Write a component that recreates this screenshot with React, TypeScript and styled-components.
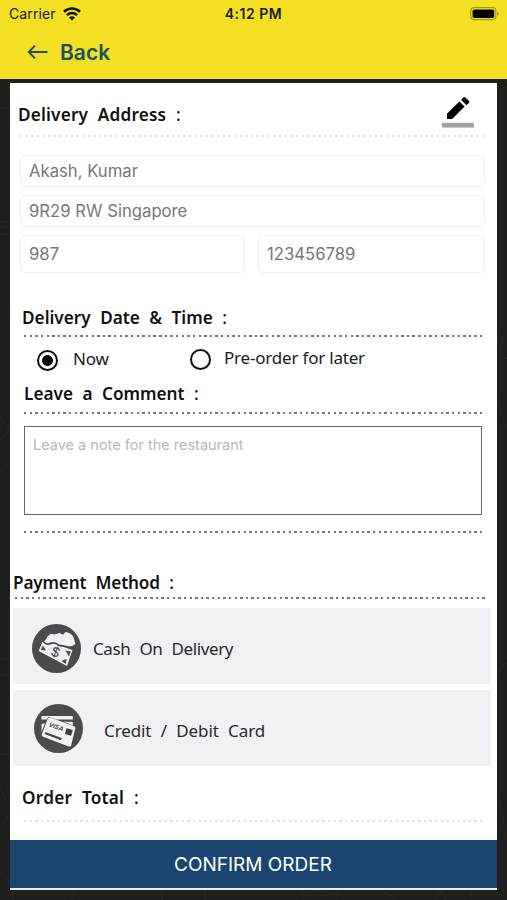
import { useState } from "react";
import styled, { createGlobalStyle, ThemeProvider } from "styled-components";

const theme = {
	colors: {
		yellow: "#f3e022",
		navy: "#1b456e",
		teal: "#1f5060",
		dark: "#1f1f1e",
		text: "#1a1a1a",
		input: "#777777",
		inputBorder: "#efefef",
		row: "#f0f0f5",
	},
	fonts: {
		system: '"Inter", sans-serif',
		body: '"Noto Sans", sans-serif',
	},
};

export default function App() {
	const [when, setWhen] = useState("now");

	return (
		<ThemeProvider theme={theme}>
			<GlobalStyle />
			<Screen>
				<Header>
					<StatusBar>
						<Carrier>
							Carrier
							<WifiIcon />
						</Carrier>
						<Clock>4:12 PM</Clock>
						<BatteryIcon />
					</StatusBar>
					<BackButton>
						<ArrowIcon />
						Back
					</BackButton>
				</Header>
				<Body>
					<Doodles />
					<Card>
						<AddressHead>
							<Heading $track={0.18}>
								Delivery Address <Colon>:</Colon>
							</Heading>
							<PencilIcon />
						</AddressHead>
						<Dots $light $left={10} $right={13} />
						<Fields>
							<Field $wide>Akash, Kumar</Field>
							<Field $wide>9R29 RW Singapore</Field>
							<Field $tall>987</Field>
							<Field $tall>123456789</Field>
						</Fields>
						<Section $top={33} $left={12}>
							<Heading>
								Delivery Date &amp; Time <Colon>:</Colon>
							</Heading>
						</Section>
						<Dots $top={5} $left={14} $right={15} />
						<Options>
							<Option onClick={() => setWhen("now")}>
								<Radio $checked={when === "now"} />
								<OptionText $gap={15}>Now</OptionText>
							</Option>
							<Option onClick={() => setWhen("later")} $raised>
								<Radio $checked={when === "later"} />
								<OptionText $gap={13}>Pre-order for later</OptionText>
							</Option>
						</Options>
						<Section $top={3} $left={14}>
							<Heading>
								Leave a Comment <Colon>:</Colon>
							</Heading>
						</Section>
						<Dots $top={6} $left={14} $right={15} />
						<Comment placeholder='Leave a note for the restaurant' />
						<Dots $top={16} $left={14} $right={15} />
						<Section $top={38} $left={3}>
							<Heading $track={-0.18}>
								Payment Method <Colon>:</Colon>
							</Heading>
						</Section>
						<Dots $top={2} $left={5} $right={11} />
						<Methods>
							<Method $top={4} $left={19} $gap={12}>
								<CashIcon />
								<MethodText $track={-0.38}>Cash On Delivery</MethodText>
							</Method>
							<Method $left={21} $gap={21}>
								<CardIcon />
								<MethodText $track={-0.1} $top={4}>
									Credit / Debit Card
								</MethodText>
							</Method>
						</Methods>
						<Section $top={20} $left={12}>
							<Heading $track={0.25}>
								Order Total <Colon>:</Colon>
							</Heading>
						</Section>
						<Dots $light $top={10} $left={14} $right={15} />
					</Card>
					<Confirm>CONFIRM ORDER</Confirm>
				</Body>
			</Screen>
		</ThemeProvider>
	);
}

const WifiIcon = () => (
	<svg width='18' height='14' viewBox='0 0 18 14' fill='none' stroke='#111' strokeWidth='2.6'>
		<path d='M1 4.8C5.6 .4 12.4 .4 17 4.8' />
		<path d='M4 8.1C6.9 5.4 11.1 5.4 14 8.1' />
		<path d='M9 13.4L6 10.4C7.7 8.9 10.3 8.9 12 10.4Z' fill='#111' stroke='none' />
	</svg>
);

const BatteryIcon = () => (
	<svg width='30' height='14' viewBox='0 0 30 14'>
		<rect x='.8' y='.6' width='25' height='12' rx='3.4' fill='none' stroke='#a3981e' strokeWidth='1.2' />
		<rect x='2.6' y='2.4' width='21.6' height='8.6' rx='1.8' fill='#000' />
		<path d='M27.3 4.4C29.2 5.2 29.2 8 27.3 8.8Z' fill='#8f851c' />
	</svg>
);

const ArrowIcon = () => (
	<svg width='21' height='16' viewBox='0 0 21 16' fill='none' stroke='#1f5060' strokeWidth='1.9'>
		<path d='M20.5 8H2M8 1.6L1.7 8L8 14.4' />
	</svg>
);

const PencilIcon = () => (
	<svg width='32' height='32' viewBox='0 0 32 32'>
		<path d='M5 17.8V23H10.2L22.6 10.6L17.4 5.4Z' fill='#000' />
		<path d='M19 3.8L21.4 1.4Q22.4.5 23.4 1.4L27 5Q27.8 6 27 7L24.4 9.2Z' fill='#000' />
		<rect y='26.8' width='32' height='4.8' fill='#a3a3a3' />
	</svg>
);

const CashIcon = () => (
	<svg width='49' height='49' viewBox='0 0 49 49'>
		<circle cx='24.5' cy='24.5' r='24.5' fill='#4b4b4b' />
		<path
			d='M12 17.5Q14.5 15.5 15.5 12.5Q18 9 22 10.5L27.5 9L31 10.8L33.5 8Q38 8.5 41 12L43.5 20Q40 23 35.5 22Q31 20.5 27 20.5Q22 16.5 17 19Q14 20 12 17.5Z'
			fill='#f0f0f5'
		/>
		<path d='M10.5 17.5Q13.5 22 18.5 20.5Q23 18.5 27 22.5Q32 22.5 36 24.5L40.5 26L35 42L6.7 27Z' fill='#f0f0f5' />
		<path d='M11 21.5L14 26.5L8.8 26Z M29.5 37L34.6 34.8L34 40Z M33.5 26.5L38.8 27.5L37 32.5Z' fill='#4b4b4b' />
		<text
			x='23.6'
			y='32.8'
			textAnchor='middle'
			fontFamily='Liberation Sans'
			fontSize='14'
			fill='#333'
			transform='rotate(22 23.6 28)'
		>
			$
		</text>
	</svg>
);

const CardIcon = () => (
	<svg width='49' height='49' viewBox='0 0 49 49'>
		<circle cx='24.5' cy='24.5' r='24.5' fill='#4b4b4b' />
		<path d='M7.5 12H38.8V15.6H22L14.5 12.8L12.6 15.6H7.5Z' fill='#f0f0f5' />
		<path d='M7.5 20L11 19.2L7.5 28Z M29.5 17.6L38.8 18V21.4Z' fill='#f0f0f5' />
		<path
			d='M16.2 13.4L39.8 22Q41.8 22.7 41.3 24.6L37.2 41.2Q36.6 43 34.8 42.4L9 32.8Q7.3 32 7.9 30.2L13.8 14.5Q14.6 12.8 16.2 13.4Z'
			fill='#f0f0f5'
		/>
		<rect x='31.6' y='25' width='6.4' height='6' fill='#3c3c3c' transform='rotate(16 35 28)' />
		<path d='M11 29L27.3 35.2' stroke='#4b4b4b' strokeWidth='2.4' />
		<text
			x='14.4'
			y='22.4'
			fontFamily='Liberation Sans'
			fontSize='6.4'
			fontWeight='700'
			fontStyle='italic'
			fill='#444'
			transform='rotate(19 14.4 22.4)'
		>
			VISA
		</text>
	</svg>
);

const Doodles = () => (
	<Backdrop viewBox='0 0 507 821' fill='none' stroke='#2b2824' strokeWidth='1'>
		<path d='M0 29H9M0 143H9M0 148H9M0 155H9M0 338L9 350M0 360Q7 360 9 345M0 393L9 382M0 580H9M0 596H9M0 675H9' />
		<path d='M0 708L9 730M0 750L9 735M0 795Q12 797 13 821M72 812V821M162 821V811M205 812V821M297 821Q297 812 317 812Q342 812 344 821M303 816H338' />
		<path d='M375 811Q394 815 396 821M435 821L441 812L446 821M471 812V821M498 250Q506 260 500 274L507 280M498 320Q503 343 507 350M498 14L507 8M498 595Q502 585 507 584M498 720Q503 730 505 760' />
	</Backdrop>
);

const GlobalStyle = createGlobalStyle`
	* {
		box-sizing: border-box;
	}

	body {
		margin: 0;
	}

	button {
		border: 0;
		padding: 0;
		background: none;
		font: inherit;
		color: inherit;
	}
`;

const Screen = styled.main`
	width: 507px;
	height: 900px;
	display: flex;
	flex-direction: column;
	overflow: hidden;
	background: ${({ theme }) => theme.colors.dark};
	color: ${({ theme }) => theme.colors.text};
	font-family: ${({ theme }) => theme.fonts.body};
`;

const Header = styled.header`
	height: 79px;
	background: ${({ theme }) => theme.colors.yellow};
	font-family: ${({ theme }) => theme.fonts.system};
`;

const StatusBar = styled.div`
	height: 27px;
	padding: 0 7px 0 9px;
	display: grid;
	grid-template-columns: 1fr auto 1fr;
	align-items: center;
	font-size: 14px;

	> svg {
		justify-self: end;
	}
`;

const Carrier = styled.div`
	display: flex;
	align-items: center;
	gap: 7px;
	letter-spacing: 0.1px;
`;

const Clock = styled.div`
	margin-right: 2px;
	font-weight: 600;
	letter-spacing: 0.5px;
`;

const BackButton = styled.button`
	height: 50px;
	margin-left: 27px;
	display: flex;
	align-items: center;
	gap: 12px;
	color: ${({ theme }) => theme.colors.teal};
	font-size: 21px;
	font-weight: 600;
`;

const Body = styled.div`
	position: relative;
	flex: 1;
	padding: 4px 10px 10px;
	display: flex;
	flex-direction: column;
`;

const Backdrop = styled.svg`
	position: absolute;
	inset: 0;
	width: 100%;
	height: 100%;
`;

const Card = styled.section`
	position: relative;
	height: 757px;
	background: #fff;
`;

const AddressHead = styled.div`
	height: 52px;
	padding: 13px 23px 0 8px;
	display: flex;
	justify-content: space-between;
	align-items: flex-start;

	h2 {
		margin-top: 7px;
	}
`;

const Heading = styled.h2<{ $track?: number }>`
	margin: 0;
	font-size: 17.2px;
	line-height: 24px;
	font-weight: 600;
	letter-spacing: ${({ $track = 0 }) => $track}px;
	word-spacing: 5px;
	color: #111;
	white-space: nowrap;
`;

const Colon = styled.span`
	font-weight: 500;
`;

const Section = styled.div<{ $top: number; $left: number }>`
	padding: ${({ $top }) => $top}px 0 0 ${({ $left }) => $left}px;
`;

const Dots = styled.div<{ $light?: boolean; $top?: number; $left: number; $right: number }>`
	height: 2px;
	margin: ${({ $top = 0 }) => $top}px ${({ $right }) => $right}px 0 ${({ $left }) => $left}px;
	background: repeating-linear-gradient(
		to right,
		${({ $light }) => ($light ? "#e2e2e2" : "#777")} 0 2.4px,
		transparent 2.4px 5.63px
	);
`;

const Fields = styled.div`
	padding: 18px 12px 0 10px;
	display: grid;
	grid-template-columns: 225px 1fr;
	gap: 8px 13px;
`;

const Field = styled.div<{ $wide?: boolean; $tall?: boolean }>`
	height: ${({ $tall }) => ($tall ? 38 : 32)}px;
	grid-column: ${({ $wide }) => ($wide ? "1 / -1" : "auto")};
	padding: 0 8px;
	display: flex;
	align-items: center;
	border: 1px solid ${({ theme }) => theme.colors.inputBorder};
	border-radius: 6px;
	color: ${({ theme }) => theme.colors.input};
	font-family: ${({ theme }) => theme.fonts.system};
	font-size: 16.7px;
`;

const Options = styled.div`
	height: 42px;
	padding: 13px 0 0 27px;
	display: grid;
	grid-template-columns: 153px 1fr;
	align-items: start;
`;

const Option = styled.button<{ $raised?: boolean }>`
	display: flex;
	align-items: center;
	margin-top: ${({ $raised }) => ($raised ? -1 : 0)}px;
`;

const Radio = styled.span<{ $checked: boolean }>`
	width: 21px;
	height: 21px;
	flex: none;
	border: 2px solid #111;
	border-radius: 50%;
	background: ${({ $checked }) => ($checked ? "radial-gradient(circle, #000 5px, transparent 5.8px)" : "none")};
`;

const OptionText = styled.span<{ $gap: number }>`
	margin: -4px 0 0 ${({ $gap }) => $gap}px;
	font-size: 17px;
	line-height: 20px;
	letter-spacing: -0.2px;
`;

const Comment = styled.textarea`
	display: block;
	width: 458px;
	height: 89px;
	margin: 12px 0 0 14px;
	padding: 9px 8px;
	border: 1px solid #666;
	border-radius: 0;
	resize: none;
	outline: none;
	font-family: ${({ theme }) => theme.fonts.system};
	font-size: 14.5px;
	line-height: 17px;

	&::placeholder {
		color: #b8b8b8;
	}
`;

const Methods = styled.div`
	padding: 9px 6px 0 3px;
	display: grid;
	gap: 6px;
`;

const Method = styled.button<{ $top?: number; $left: number; $gap: number }>`
	height: 76px;
	padding: ${({ $top = 0 }) => $top}px 0 0 ${({ $left }) => $left}px;
	display: flex;
	align-items: center;
	gap: ${({ $gap }) => $gap}px;
	background: ${({ theme }) => theme.colors.row};
	color: #2a2a2a;
	font-size: 17px;
	word-spacing: 5px;
`;

const MethodText = styled.span<{ $track: number; $top?: number }>`
	padding-top: ${({ $top = 0 }) => $top}px;
	letter-spacing: ${({ $track }) => $track}px;
`;

const Confirm = styled.button`
	position: relative;
	height: 50px;
	padding: 1px 1px 0 0;
	background: ${({ theme }) => theme.colors.navy};
	border-bottom: 2px solid #e8ecf0;
	color: #fff;
	font-family: ${({ theme }) => theme.fonts.system};
	font-size: 19px;
`;
